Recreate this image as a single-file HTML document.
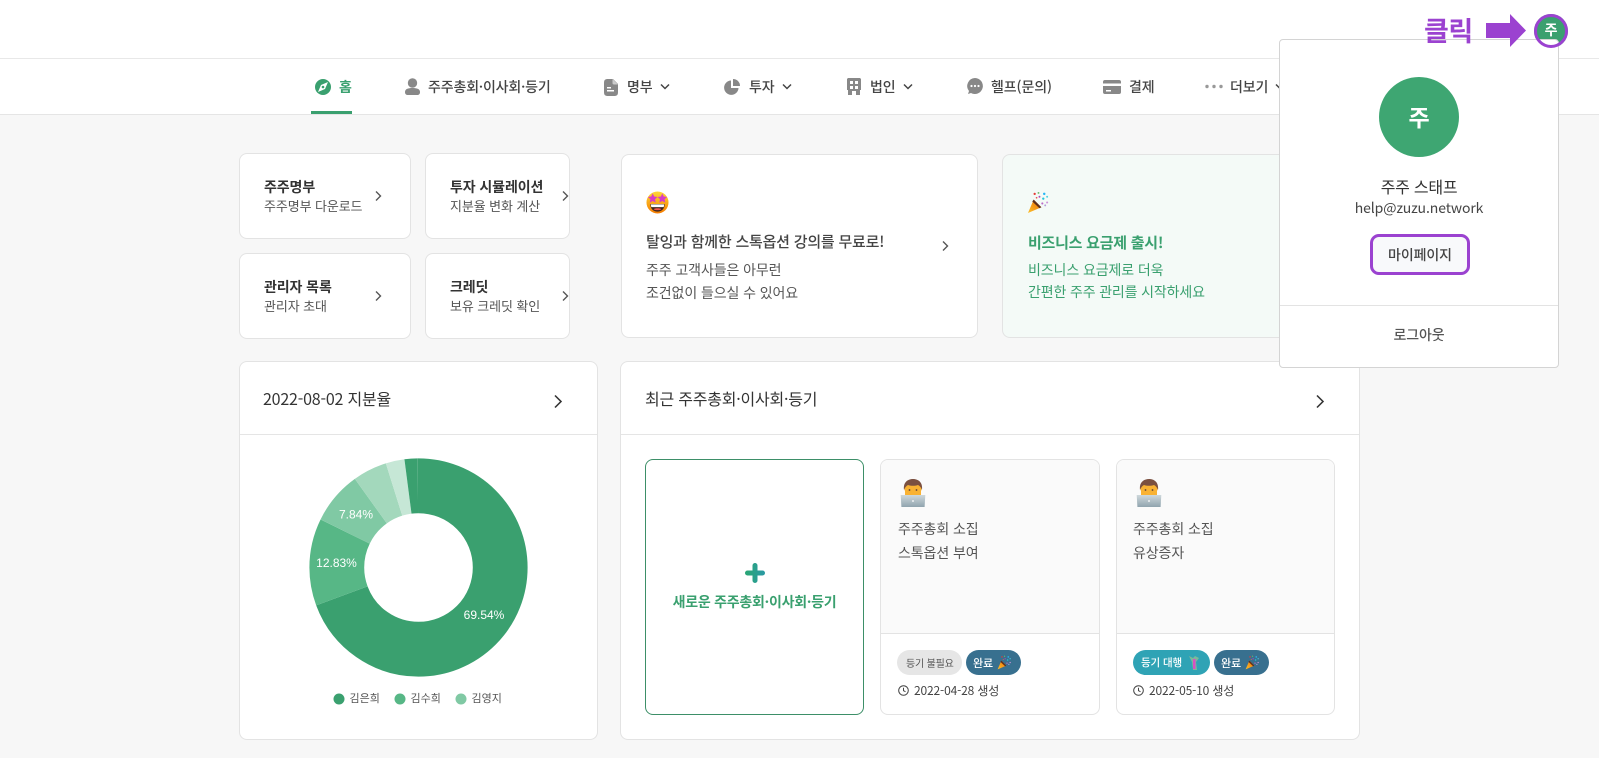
<!DOCTYPE html>
<html lang="ko">
<head>
<meta charset="utf-8">
<title>주주</title>
<style>
html,body{margin:0;padding:0;width:1599px;height:758px;overflow:hidden;background:#f7f7f7;font-family:"Liberation Sans","Noto Sans CJK KR",sans-serif;}
body{position:relative;color:#333;}
*{box-sizing:border-box;}
.a{position:absolute;}
.t{position:absolute;white-space:nowrap;line-height:20px;height:20px;letter-spacing:-.1px;font-family:"Noto Sans CJK KR","Liberation Sans",sans-serif;}
.card{position:absolute;background:#fff;border:1px solid #e3e3e3;border-radius:8px;}
.nav{font-size:14px;font-weight:500;color:#444;}
.title{font-size:14px;font-weight:700;color:#333;}
.sub{font-size:13px;color:#555;}
.s14{font-size:14px;color:#555;}
.g{color:#3aa06f;}
.pill{position:absolute;height:25px;border-radius:13px;top:650px;}
svg{position:absolute;overflow:visible;}
.ch{fill:none;stroke:#444;stroke-width:1.5;}
</style>
</head>
<body>
<svg width="0" height="0" style="position:absolute">
<defs>
<linearGradient id="face" x1="0" y1="0" x2="0" y2="1"><stop offset="0" stop-color="#fdd835"/><stop offset="1" stop-color="#f57c00"/></linearGradient>
<linearGradient id="lap" x1="0" y1="0" x2="0" y2="1"><stop offset="0" stop-color="#cfd8dc"/><stop offset="1" stop-color="#90a4ae"/></linearGradient>
<linearGradient id="cone" x1="0" y1="1" x2="1" y2="0"><stop offset="0" stop-color="#fbc02d"/><stop offset="1" stop-color="#ef6c00"/></linearGradient>
<linearGradient id="plus" x1="0" y1="0" x2="1" y2="0"><stop offset="0" stop-color="#2aa578"/><stop offset="1" stop-color="#2a9aa0"/></linearGradient>
<symbol id="star" viewBox="0 0 24 24">
<circle cx="12" cy="12" r="11.500" fill="url(#face)"/>
<path d="M7 2.500l1.500 3.300 3.500.4-2.600 2.400.7 3.500L7 10.400l-3.100 1.700.7-3.500L2 6.200l3.500-.4z" fill="#d63cc6"/>
<path d="M17 2.500l1.500 3.300 3.500.4-2.600 2.400.7 3.500L17 10.400l-3.100 1.700.7-3.500L12 6.200l3.500-.4z" fill="#d63cc6"/>
<path d="M4.500 13.500h15c0 5-3.300 8-7.500 8s-7.500-3-7.500-8z" fill="#3e2723"/>
<path d="M5 14h14l-.5 2.800H5.500z" fill="#fff"/>
<path d="M8 19c1-1.300 7-1.300 8 0-1 1.300-7 1.300-8 0z" fill="#ef5350"/>
</symbol>
<symbol id="party" viewBox="0 0 24 24">
<path d="M1 23L7 9l8 8z" fill="url(#cone)"/>
<path d="M7 9l8 8-2 1-7.500-7z" fill="#5d2f1e"/>
<circle cx="8" cy="3" r="1.200" fill="#e53935"/><circle cx="13" cy="6" r="1" fill="#ab47bc"/>
<circle cx="18" cy="3" r="1.300" fill="#29b6f6"/><circle cx="21" cy="6" r="1" fill="#4dd0e1"/>
<circle cx="12" cy="2" r="1" fill="#66bb6a"/><circle cx="17" cy="8" r="1.200" fill="#26c6da"/>
<circle cx="21" cy="12" r="1.100" fill="#ce93d8"/><circle cx="16" cy="13" r="1.100" fill="#ba68c8"/>
<circle cx="19" cy="15" r="1" fill="#b39ddb"/><circle cx="10" cy="7" r=".9" fill="#ef5350"/>
</symbol>
<symbol id="dev" viewBox="0 0 26 28">
<rect x="5" y="12" width="16" height="6" fill="#f9b233"/>
<circle cx="13" cy="9.500" r="8.500" fill="#f9b233"/>
<path d="M4 11C3 3 8 0 13 0s10 3 9 11c-1-2.500-2-4-4-5-3 1-7 1-10 0-2 1-3 2.500-4 5z" fill="#7b5040"/>
<circle cx="9.500" cy="11" r=".9" fill="#5d4037"/><circle cx="16.500" cy="11" r=".9" fill="#5d4037"/>
<path d="M.7 16h24.600l-.7 12H1.400z" fill="url(#lap)"/>
<circle cx="13" cy="22" r="1" fill="#eceff1"/>
</symbol>
<symbol id="chev" viewBox="0 0 10 14"><path d="M3 2.500l4.500 4.500-4.500 4.500" fill="none" stroke="#555" stroke-width="1.400"/></symbol>
</defs>
</svg>

<!-- header -->
<div class="a" style="left:0;top:0;width:1599px;height:115px;background:#fff;border-bottom:1px solid #e5e5e5"></div>
<div class="a" style="left:0;top:58px;width:1599px;height:1px;background:#e8e8e8"></div>
<div class="a" style="left:311px;top:111px;width:41px;height:3px;background:#3aa06f"></div>

<!-- nav icons -->
<svg style="left:315px;top:79px" width="16" height="16" viewBox="0 0 16 16"><circle cx="8" cy="8" r="8" fill="#3aa06f"/><path d="M13 3L10 10 3 13l3-7z" fill="#fff"/><circle cx="8" cy="8" r="1.300" fill="#3aa06f"/></svg>
<svg style="left:405px;top:78px" width="15" height="17" viewBox="0 0 15 17"><circle cx="7.500" cy="5" r="4.700" fill="#888"/><path d="M0 14c0-3 3-4 7.500-4s7.500 1 7.500 4c0 2-1 3-3 3H3c-2 0-3-1-3-3z" fill="#888"/></svg>
<svg style="left:604px;top:79px" width="14" height="17" viewBox="0 0 14 17"><path d="M4 0h5l5 5v8c0 3-1 4-4 4H4c-3 0-4-1-4-4V4c0-3 1-4 4-4z" fill="#888"/><path d="M8.500 0l5.500 5.500H10c-1 0-1.500-.5-1.500-1.500z" fill="#ccc"/><rect x="3" y="8" width="4" height="1.500" fill="#fff"/><rect x="3" y="11" width="7" height="1.500" fill="#fff"/></svg>
<svg style="left:724px;top:79px" width="16" height="16" viewBox="0 0 16 16"><path d="M7 1.500A7.200 7.200 0 1 0 14.500 9H7z" fill="#888"/><path d="M9 0a7 7 0 0 1 7 7H9z" fill="#888"/></svg>
<svg style="left:847px;top:78px" width="14" height="17" viewBox="0 0 14 17"><path d="M1 0h12l1 1v11h-1v5H9v-4H5v4H1v-5H0V1z" fill="#888"/><rect x="3" y="3" width="3" height="3" fill="#fff"/><rect x="8" y="3" width="3" height="3" fill="#fff"/><rect x="3" y="8" width="3" height="3" fill="#fff"/><rect x="8" y="8" width="3" height="3" fill="#fff"/></svg>
<svg style="left:967px;top:78px" width="16" height="16" viewBox="0 0 16 16"><path d="M8 0a8 8 0 1 1-4 15l-3 1 1-3A8 8 0 0 1 8 0z" fill="#888"/><circle cx="4.500" cy="8" r="1.100" fill="#fff"/><circle cx="8" cy="8" r="1.100" fill="#fff"/><circle cx="11.500" cy="8" r="1.100" fill="#fff"/></svg>
<svg style="left:1103px;top:80px" width="18" height="14" viewBox="0 0 18 14"><rect width="18" height="14" rx="2" fill="#888"/><rect y="3.500" width="18" height="2.500" fill="#fff"/><rect x="3" y="10" width="5" height="1.500" fill="#fff"/></svg>
<svg style="left:1205px;top:84px" width="18" height="5" viewBox="0 0 18 5"><circle cx="2" cy="2.500" r="1.700" fill="#999"/><circle cx="9" cy="2.500" r="1.700" fill="#999"/><circle cx="16" cy="2.500" r="1.700" fill="#999"/></svg>

<!-- nav text -->
<div class="t nav g" style="left:339px;top:77px;color:#3aa06f;font-weight:700">홈</div>
<div class="t nav" style="left:428px;top:77px;letter-spacing:-.15px">주주총회·이사회·등기</div>
<div class="t nav" style="left:627px;top:77px">명부</div>
<div class="t nav" style="left:749px;top:77px">투자</div>
<div class="t nav" style="left:870px;top:77px">법인</div>
<div class="t nav" style="left:991px;top:77px">헬프(문의)</div>
<div class="t nav" style="left:1129px;top:77px">결제</div>
<div class="t nav" style="left:1230px;top:77px">더보기</div>
<svg style="left:660px;top:83px" width="10" height="7" viewBox="0 0 10 7"><path d="M1 1.500l4 4 4-4" class="ch"/></svg>
<svg style="left:782px;top:83px" width="10" height="7" viewBox="0 0 10 7"><path d="M1 1.500l4 4 4-4" class="ch"/></svg>
<svg style="left:903px;top:83px" width="10" height="7" viewBox="0 0 10 7"><path d="M1 1.500l4 4 4-4" class="ch"/></svg>
<svg style="left:1275px;top:83px" width="10" height="7" viewBox="0 0 10 7"><path d="M1 1.500l4 4 4-4" class="ch"/></svg>

<!-- small cards -->
<div class="card" style="left:239px;top:153px;width:172px;height:86px"></div>
<div class="card" style="left:425px;top:153px;width:145px;height:86px"></div>
<div class="card" style="left:239px;top:253px;width:172px;height:86px"></div>
<div class="card" style="left:425px;top:253px;width:145px;height:86px"></div>
<div class="t title" style="left:264px;top:177px">주주명부</div>
<div class="t sub" style="left:264px;top:196px">주주명부 다운로드</div>
<div class="t title" style="left:450px;top:177px">투자 시뮬레이션</div>
<div class="t sub" style="left:450px;top:196px">지분율 변화 계산</div>
<div class="t title" style="left:264px;top:277px">관리자 목록</div>
<div class="t sub" style="left:264px;top:296px">관리자 초대</div>
<div class="t title" style="left:450px;top:277px">크레딧</div>
<div class="t sub" style="left:450px;top:296px">보유 크레딧 확인</div>
<svg style="left:373px;top:189px" width="10" height="14"><use href="#chev"/></svg>
<svg style="left:560px;top:189px" width="10" height="14"><use href="#chev"/></svg>
<svg style="left:373px;top:289px" width="10" height="14"><use href="#chev"/></svg>
<svg style="left:560px;top:289px" width="10" height="14"><use href="#chev"/></svg>

<!-- promo cards -->
<div class="card" style="left:621px;top:154px;width:357px;height:184px"></div>
<svg style="left:646px;top:191px" width="23" height="23"><use href="#star" width="23" height="23"/></svg>
<div class="t" style="left:646px;top:232px;font-size:15px;font-weight:500;color:#444;letter-spacing:-.22px">탈잉과 함께한 스톡옵션 강의를 무료로!</div>
<div class="t s14" style="left:646px;top:260px">주주 고객사들은 아무런</div>
<div class="t s14" style="left:646px;top:283px">조건없이 들으실 수 있어요</div>
<svg style="left:940px;top:239px" width="10" height="14"><use href="#chev"/></svg>

<div class="card" style="left:1002px;top:154px;width:358px;height:184px;background:#f4faf7"></div>
<svg style="left:1027px;top:191px" width="23" height="23"><use href="#party" width="23" height="23"/></svg>
<div class="t g" style="left:1028px;top:233px;font-size:15px;font-weight:700;letter-spacing:-.25px">비즈니스 요금제 출시!</div>
<div class="t g" style="left:1028px;top:260px;font-size:14px">비즈니스 요금제로 더욱</div>
<div class="t g" style="left:1028px;top:282px;font-size:14px;letter-spacing:-.15px">간편한 주주 관리를 시작하세요</div>

<!-- chart panel -->
<div class="card" style="left:239px;top:361px;width:359px;height:379px"></div>
<div class="a" style="left:240px;top:434px;width:357px;height:1px;background:#e5e5e5"></div>
<div class="t" style="left:263px;top:388px;font-size:16px;color:#333;letter-spacing:-.2px">2022-08-02 지분율</div>
<svg style="left:552px;top:393px" width="12" height="17" viewBox="0 0 10 14"><path d="M2.500 2l5 5-5 5" fill="none" stroke="#333" stroke-width="1.300"/></svg>

<svg style="left:309px;top:458.300px" width="219" height="219" viewBox="0 0 219 219">
<g transform="rotate(-90 109.500 109.500)" fill="none" stroke-width="54.800">
<circle cx="109.500" cy="109.500" r="81.700" pathLength="360" stroke="#3aa06f" stroke-dasharray="250 110"/>
<circle cx="109.500" cy="109.500" r="81.700" pathLength="360" stroke="#57b786" stroke-dasharray="46.500 313.500" stroke-dashoffset="-250"/>
<circle cx="109.500" cy="109.500" r="81.700" pathLength="360" stroke="#80c9a4" stroke-dasharray="28.200 331.800" stroke-dashoffset="-296.500"/>
<circle cx="109.500" cy="109.500" r="81.700" pathLength="360" stroke="#a3d8bc" stroke-dasharray="18.300 341.700" stroke-dashoffset="-324.700"/>
<circle cx="109.500" cy="109.500" r="81.700" pathLength="360" stroke="#c6e7d6" stroke-dasharray="10 350" stroke-dashoffset="-343"/>
<circle cx="109.500" cy="109.500" r="81.700" pathLength="360" stroke="#3aa06f" stroke-dasharray="7 353" stroke-dashoffset="-353"/>
</g>
<text x="175" y="161" text-anchor="middle" font-family="Liberation Sans" font-size="12" fill="#fff">69.54%</text>
<text x="27.500" y="109" text-anchor="middle" font-family="Liberation Sans" font-size="12" fill="#fff">12.83%</text>
<text x="47" y="60.500" text-anchor="middle" font-family="Liberation Sans" font-size="12" fill="#fff">7.84%</text>
</svg>
<svg style="left:333px;top:693px" width="140" height="12"><circle cx="6" cy="6" r="5.500" fill="#3aa06f"/><circle cx="67" cy="6" r="5.500" fill="#57b786"/><circle cx="128" cy="6" r="5.500" fill="#80c9a4"/></svg>
<div class="t" style="left:349.500px;top:688px;font-size:11px;letter-spacing:0;color:#555">김은희</div>
<div class="t" style="left:410.500px;top:688px;font-size:11px;letter-spacing:0;color:#555">김수희</div>
<div class="t" style="left:471.500px;top:688px;font-size:11px;letter-spacing:0;color:#555">김영지</div>

<!-- meetings panel -->
<div class="card" style="left:620px;top:361px;width:740px;height:379px"></div>
<div class="a" style="left:621px;top:434px;width:738px;height:1px;background:#e5e5e5"></div>
<div class="t" style="left:645px;top:388px;font-size:16px;color:#333;letter-spacing:-.22px">최근 주주총회·이사회·등기</div>
<svg style="left:1314px;top:393px" width="12" height="17" viewBox="0 0 10 14"><path d="M2.500 2l5 5-5 5" fill="none" stroke="#333" stroke-width="1.300"/></svg>

<div class="card" style="left:645px;top:459px;width:219px;height:256px;border-color:#3d8f68"></div>
<svg style="left:745px;top:563px" width="20" height="20" viewBox="0 0 20 20"><path d="M10 2.500v15M2.500 10h15" stroke="url(#plus)" stroke-width="5" stroke-linecap="round" fill="none"/></svg>
<div class="t g" style="left:645px;top:592px;width:219px;text-align:center;font-size:14px;font-weight:700;letter-spacing:-.25px">새로운 주주총회·이사회·등기</div>

<div class="card" style="left:880px;top:459px;width:220px;height:256px;overflow:hidden"><div class="a" style="left:0;top:0;width:100%;height:174px;background:#fafafa;border-bottom:1px solid #e3e3e3"></div></div>
<div class="card" style="left:1116px;top:459px;width:219px;height:256px;overflow:hidden"><div class="a" style="left:0;top:0;width:100%;height:174px;background:#fafafa;border-bottom:1px solid #e3e3e3"></div></div>

<svg style="left:900px;top:479px" width="26" height="28"><use href="#dev" width="26" height="28"/></svg>
<svg style="left:1136px;top:479px" width="26" height="28"><use href="#dev" width="26" height="28"/></svg>
<div class="t s14" style="left:898px;top:519px">주주총회 소집</div>
<div class="t s14" style="left:898px;top:543px">스톡옵션 부여</div>
<div class="t s14" style="left:1133px;top:519px">주주총회 소집</div>
<div class="t s14" style="left:1133px;top:543px">유상증자</div>

<div class="pill" style="left:897px;width:65px;background:#e6e6e6"></div>
<div class="t" style="left:906px;top:653px;font-size:10px;color:#555;letter-spacing:-.2px">등기 불필요</div>
<div class="pill" style="left:966px;width:55px;background:#38708f"></div>
<div class="t" style="left:973px;top:653px;font-size:11px;font-weight:500;color:#fff">완료</div>
<svg style="left:997px;top:655px" width="15" height="15"><use href="#party" width="15" height="15"/></svg>

<div class="pill" style="left:1133px;width:77px;background:#2fa3b5"></div>
<div class="t" style="left:1141px;top:653px;font-size:10.500px;font-weight:500;color:#fff;letter-spacing:-.1px">등기 대행</div>
<svg style="left:1188px;top:655px" width="12" height="16" viewBox="0 0 12 16"><path d="M1 1l4 2 2-2 4 2-3 4 1 8H5L4 7z" fill="#7cb89a"/><path d="M5 4h2.500v10H5z" fill="#d84fc4"/></svg>
<div class="pill" style="left:1214px;width:55px;background:#38708f"></div>
<div class="t" style="left:1221px;top:653px;font-size:11px;font-weight:500;color:#fff">완료</div>
<svg style="left:1245px;top:655px" width="15" height="15"><use href="#party" width="15" height="15"/></svg>

<svg style="left:898px;top:685px" width="11" height="11" viewBox="0 0 11 11"><circle cx="5.500" cy="5.500" r="4.800" fill="none" stroke="#444"/><path d="M5.500 2.800v2.900l2 1" fill="none" stroke="#444"/></svg>
<div class="t" style="left:914px;top:681px;font-size:12px;color:#444;letter-spacing:-.15px">2022-04-28 생성</div>
<svg style="left:1133px;top:685px" width="11" height="11" viewBox="0 0 11 11"><circle cx="5.500" cy="5.500" r="4.800" fill="none" stroke="#444"/><path d="M5.500 2.800v2.900l2 1" fill="none" stroke="#444"/></svg>
<div class="t" style="left:1149px;top:681px;font-size:12px;color:#444;letter-spacing:-.15px">2022-05-10 생성</div>

<!-- avatar -->
<div class="a" style="left:1534px;top:14px;width:34px;height:34px;border-radius:50%;background:#3aa06f"></div>

<!-- popup -->
<div class="a" style="left:1279px;top:39px;width:280px;height:329px;background:#fff;border:1px solid #d4d4d4;border-radius:4px"></div>
<div class="a" style="left:1379px;top:77px;width:80px;height:80px;border-radius:50%;background:#3ea672"></div>
<div class="t" style="left:1379px;top:106px;width:80px;text-align:center;color:#fff;font-size:23px;font-weight:700">주</div>
<div class="t" style="left:1279px;top:176px;width:280px;text-align:center;font-size:16px;color:#333;letter-spacing:-.25px">주주 스태프</div>
<div class="t" style="left:1279px;top:198px;width:280px;text-align:center;font-size:14px;color:#444">help@zuzu.network</div>
<div class="a" style="left:1370px;top:234px;width:100px;height:41px;border:3px solid #9b42d0;border-radius:9px;background:#f8f9fb"></div>
<div class="t" style="left:1370px;top:245px;width:100px;text-align:center;font-size:14px;font-weight:500;color:#444">마이페이지</div>
<div class="a" style="left:1280px;top:305px;width:278px;height:1px;background:#e3e3e3"></div>
<div class="t" style="left:1279px;top:325px;width:280px;text-align:center;font-size:14px;font-weight:500;color:#555">로그아웃</div>

<!-- annotation -->
<div class="a" style="left:1534px;top:14px;width:34px;height:34px;border-radius:50%;border:3px solid #9b42d0"></div>
<div class="t" style="left:1534px;top:20px;width:34px;text-align:center;color:#fff;font-size:14px;font-weight:700">주</div>
<div class="t" style="left:1424px;top:15px;height:30px;line-height:30px;font-size:27px;font-weight:700;color:#9b42d0;letter-spacing:-.5px">클릭</div>
<svg style="left:1486px;top:14px" width="40" height="33" viewBox="0 0 40 33"><path d="M0 9h24V0l16 16.500L24 33v-9H0z" fill="#9b42d0"/></svg>
</body>
</html>
